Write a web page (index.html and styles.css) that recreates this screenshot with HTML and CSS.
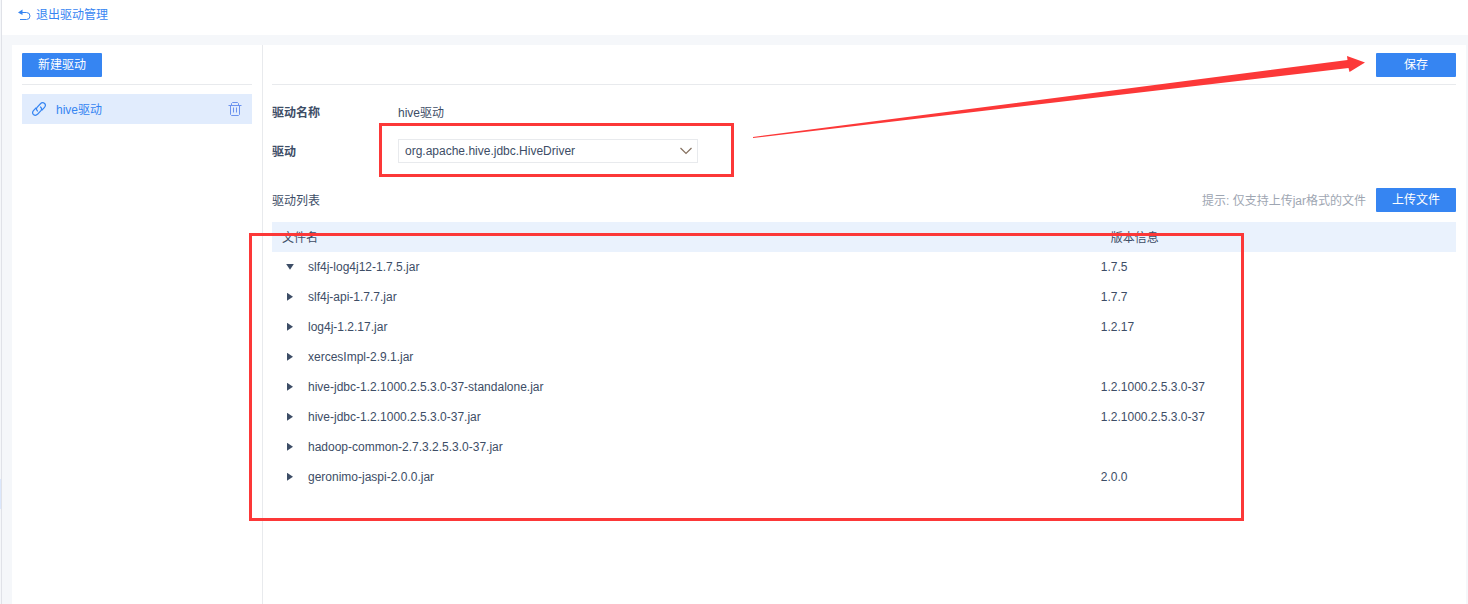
FILE: index.html
```html
<!DOCTYPE html>
<html lang="zh-CN">
<head>
<meta charset="utf-8">
<title>驱动管理</title>
<link rel="stylesheet" href="styles.css">
</head>
<body>
<div class="rail"><span class="rail-active"></span></div>
<div class="page">
  <header class="topbar">
    <a class="back" href="#">
      <svg width="14" height="12" viewBox="0 0 14 12" fill="none" stroke="currentColor"><path d="M2 3.500h6.500a3.500 3.500 0 0 1 0 7H2"/><path d="M4.500.5 0 3.500l4.500 2.500z" fill="currentColor" stroke="none"/></svg>
      <span>退出驱动管理</span>
    </a>
  </header>
  <div class="panel">
    <aside class="sidebar">
      <div class="toolbar"><button class="btn" type="button">新建驱动</button></div>
      <div class="driver">
        <a class="driver-link" href="#">
          <svg width="14" height="14" viewBox="0 0 14 14" fill="none" stroke="currentColor" stroke-width="1.200" stroke-linecap="round"><path d="M5.500 9C4 7.800 4.300 6.300 5.300 5.100L8.200 2C9.600.6 11.400.5 12.600 1.500c1.100 1.100.9 2.800-.3 4.100L10 8"/><path d="M8.500 5C10 6.200 9.700 7.700 8.700 8.900L5.800 12C4.400 13.400 2.600 13.500 1.400 12.500.3 11.400.5 9.700 1.700 8.400L4 6"/></svg>
          <span class="caption">hive驱动</span>
        </a>
        <button class="icon-btn" type="button" aria-label="删除">
          <svg width="14" height="16" viewBox="0 0 14 16" fill="none" stroke="currentColor"><path d="M.5 4.500h13M3.500 4.500v-2l1-1h5l1 1v2M2.500 4.500v9l1 1h7l1-1v-9M5.500 6.500v5M8.500 6.500v5"/></svg>
        </button>
      </div>
    </aside>
    <main class="content">
      <div class="toolbar toolbar-end"><button class="btn" type="button">保存</button></div>
      <div class="form">
        <span class="label caption">驱动名称</span>
        <span class="caption">hive驱动</span>
        <label class="label caption" for="driver">驱动</label>
        <div class="select-wrap">
          <select id="driver" class="select"><option>org.apache.hive.jdbc.HiveDriver</option></select>
          <svg class="chevron" width="12" height="8" viewBox="0 0 12 8" fill="none" stroke="currentColor" stroke-width="1.200"><path d="m.5 1 5.500 5.500L11.500 1"/></svg>
        </div>
      </div>
      <div class="list-head">
        <span class="list-title caption">驱动列表</span>
        <span class="hint caption">提示: 仅支持上传jar格式的文件</span>
        <button class="btn" type="button">上传文件</button>
      </div>
      <table class="files">
        <thead><tr><th class="col-name">文件名</th><th>版本信息</th></tr></thead>
        <tbody>
          <tr><td><button class="toggle open" type="button" aria-label="收起"></button>slf4j-log4j12-1.7.5.jar</td><td>1.7.5</td></tr>
          <tr><td><button class="toggle" type="button" aria-label="展开"></button>slf4j-api-1.7.7.jar</td><td>1.7.7</td></tr>
          <tr><td><button class="toggle" type="button" aria-label="展开"></button>log4j-1.2.17.jar</td><td>1.2.17</td></tr>
          <tr><td><button class="toggle" type="button" aria-label="展开"></button>xercesImpl-2.9.1.jar</td><td></td></tr>
          <tr><td><button class="toggle" type="button" aria-label="展开"></button>hive-jdbc-1.2.1000.2.5.3.0-37-standalone.jar</td><td>1.2.1000.2.5.3.0-37</td></tr>
          <tr><td><button class="toggle" type="button" aria-label="展开"></button>hive-jdbc-1.2.1000.2.5.3.0-37.jar</td><td>1.2.1000.2.5.3.0-37</td></tr>
          <tr><td><button class="toggle" type="button" aria-label="展开"></button>hadoop-common-2.7.3.2.5.3.0-37.jar</td><td></td></tr>
          <tr><td><button class="toggle" type="button" aria-label="展开"></button>geronimo-jaspi-2.0.0.jar</td><td>2.0.0</td></tr>
        </tbody>
      </table>
    </main>
  </div>
</div>
<svg class="marks" width="1468" height="604" viewBox="0 0 1468 604" aria-hidden="true">
  <g fill="none" stroke="#fc3838" stroke-width="3">
    <rect x="380.500" y="124.500" width="352" height="51"/>
    <rect x="250.500" y="234.500" width="992" height="285"/>
  </g>
  <path d="M753 137 1347.500 60 1347 56 1365 62.500 1349.500 72 1348.500 68 753 138z" fill="#fc3838"/>
</svg>
</body>
</html>
```

FILE: styles.css
```css
* { box-sizing: border-box; }
body {
  margin: 0;
  min-height: 100vh;
  display: flex;
  position: relative;
  overflow: hidden;
  background: #f5f7fa;
  color: #3d4d66;
  font: 12px/18px "Liberation Sans", "Noto Sans CJK SC", sans-serif;
}
button, select { font: inherit; color: inherit; }
a { color: #3685f2; text-decoration: none; }
svg { display: block; flex: none; }
.caption { padding-top: 2px; }

.rail {
  width: 2px;
  padding-top: 479px;
  background: #f5f7fa;
  border-right: 1px solid #e0e2e8;
}
.rail-active { display: block; height: 30px; background: #dbe7fc; }

.page { flex: 1; display: flex; flex-direction: column; }
.topbar {
  height: 35px;
  padding: 6px 16px;
  background: #fff;
}
.back { display: inline-flex; align-items: center; gap: 4px; }

.panel {
  flex: 1;
  display: flex;
  margin: 10px 2px 0 10px;
  background: #fff;
}
.sidebar { width: 250px; padding: 8px 10px; }
.content {
  flex: 1;
  padding: 8px 10px 8px 9px;
  border-left: 1px solid #e8eaed;
}
.toolbar {
  display: flex;
  padding-bottom: 7px;
  border-bottom: 1px solid #e8eaed;
}
.toolbar-end { justify-content: flex-end; }
.btn {
  width: 80px;
  height: 24px;
  padding: 0;
  border: 0;
  border-radius: 1px;
  background: #3685f2;
  color: #fff;
}

.driver {
  display: flex;
  align-items: center;
  justify-content: space-between;
  height: 30px;
  margin-top: 9px;
  padding: 0 10px;
  background: #e1ecfd;
}
.driver-link { display: flex; align-items: center; gap: 10px; }
.icon-btn { padding: 0; border: 0; background: none; color: #6c93ee; }

.form {
  display: grid;
  grid-template-columns: 126px 300px;
  grid-auto-rows: 24px;
  row-gap: 15px;
  align-items: center;
  margin-top: 15px;
}
.label { font-weight: bold; }
.select-wrap { position: relative; }
.select {
  display: block;
  appearance: none;
  width: 100%;
  height: 24px;
  padding: 0 24px 0 6px;
  border: 1px solid #e8eaed;
  border-radius: 0;
  background: #fff;
}
.chevron {
  position: absolute;
  right: 6px;
  top: 8px;
  color: #85705f;
  pointer-events: none;
}

.list-head { display: flex; align-items: center; gap: 10px; margin: 25px 0 10px; }
.list-title { flex: 1; }
.hint { color: #9ea6b2; }

.files { width: 100%; border-collapse: collapse; table-layout: fixed; }
.files th {
  height: 30px;
  padding: 2px 10px 0;
  background: #eaf2fd;
  font-weight: normal;
  text-align: left;
}
.files td { height: 30px; padding: 0; }
.col-name { width: 70%; }
.toggle {
  width: 16px;
  height: 14px;
  margin: 0 10px;
  padding: 0 0 2px;
  border: 0;
  background: none;
  vertical-align: middle;
}
.toggle::before {
  content: "";
  display: block;
  width: 6px;
  height: 8px;
  margin: 0 auto;
  background: currentColor;
  clip-path: polygon(0 0, 100% 50%, 0 100%);
}
.toggle.open::before {
  width: 8px;
  height: 6px;
  clip-path: polygon(0 0, 100% 0, 50% 100%);
}

.marks { position: absolute; left: 0; top: 0; pointer-events: none; }
```
